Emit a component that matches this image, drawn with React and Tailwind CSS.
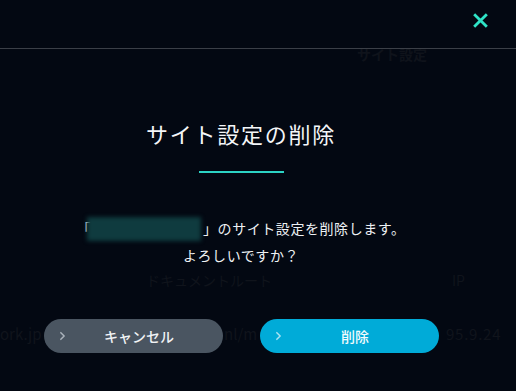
import React from 'react';

const jp = { fontFamily: '"Noto Sans CJK JP", "Noto Sans", sans-serif' };

const Chevron = ({ className }) => (
  <svg viewBox="0 0 8 12" className={className} fill="none" stroke="currentColor" strokeWidth="1.8" strokeLinecap="round" strokeLinejoin="round">
    <path d="M2 2l4 4-4 4" />
  </svg>
);

const App = () => {
  return (
    <div className="relative w-[516px] h-[391px] overflow-hidden bg-[#030812] text-white" style={jp}>
      {/* page behind the overlay, barely visible */}
      <div className="absolute inset-0 whitespace-nowrap text-[14px] text-[#10141c] pointer-events-none">
        <span className="absolute left-[357px] top-[44px] font-bold text-[#0f131b]">サイト設定</span>
        <span className="absolute left-[146px] top-[270px]">ドキュメントルート</span>
        <span className="absolute left-[452px] top-[270px]">IP</span>
        <span className="absolute left-[0px] top-[323px] text-[15px]">ork.jp</span>
        <span className="absolute left-[224px] top-[323px] text-[15px]">nl/m</span>
        <span className="absolute left-[446px] top-[323px] text-[15px] tracking-wider">95.9.24</span>
      </div>

      <div className="relative flex h-[49px] items-start justify-end border-b border-[#3b3f47] pr-[28px] pt-[13px]">
        <button className="text-[#2fe3c6]">
          <svg viewBox="0 0 14 14" className="w-[15px] h-[15px]" fill="none" stroke="currentColor" strokeWidth="2.6" strokeLinecap="square">
            <path d="M2 2l10 10M12 2L2 12" />
          </svg>
        </button>
      </div>

      <div className="relative flex w-[482px] flex-col items-center">
        <h2 className="mt-[68px] text-[22px] leading-[32px] tracking-[0.08em] text-[#f4f6f8]">サイト設定の削除</h2>
        <div className="mt-[22px] h-[2px] w-[85px] bg-[#2cd3c4]" />

        <div className="mt-[42px] text-center text-[14px] leading-[27px] tracking-[0.04em] text-[#eef1f4]">
          <p className="flex items-center">
            <span>「</span>
            <span className="inline-block h-[24px] w-[114px] -ml-[4px] mr-[2px] bg-[#0f3b3f] blur-[2px]" />
            <span>」のサイト設定を削除します。</span>
          </p>
          <p>よろしいですか？</p>
        </div>

        <div className="mt-[50px] flex gap-[37px] pl-[1px]">
          <button className="relative flex h-[34px] w-[179px] items-center justify-center rounded-full bg-[#4a5561] pl-[11px] text-[14px] font-medium text-[#f1f3f5]">
            <Chevron className="absolute left-[15px] w-[7px] h-[10px] text-[#aab2bb]" />
            キャンセル
          </button>
          <button className="relative flex h-[34px] w-[179px] items-center justify-center rounded-full bg-[#00abd8] pl-[11px] text-[14px] font-medium text-[#f4fbfd]">
            <Chevron className="absolute left-[15px] w-[7px] h-[10px] text-[#a9e3f2]" />
            削除
          </button>
        </div>
      </div>
    </div>
  );
};

export default App;
